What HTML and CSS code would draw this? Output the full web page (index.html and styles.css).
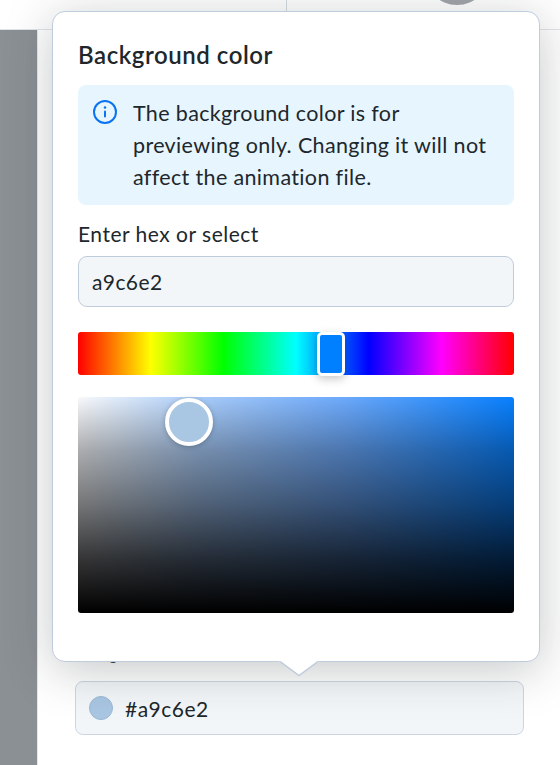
FILE: index.html
```html
<!DOCTYPE html>
<html lang="en">
<head>
<meta charset="utf-8">
<title>Background color</title>
<link rel="stylesheet" href="styles.css">
</head>
<body>
<div class="page">
  <header class="topbar">
    <div class="topbar-left"></div>
    <div class="topbar-right"><span class="avatar"></span></div>
  </header>
  <div class="content">
    <aside class="sidebar"></aside>
    <main class="main">
      <div class="field-label">Background color</div>
      <div class="color-field">
        <span class="swatch"></span>
        <span class="color-value">#a9c6e2</span>
      </div>
    </main>
  </div>
  <section class="popover">
    <h2 class="title">Background color</h2>
    <div class="notice">
      <svg class="info-icon" viewBox="0 0 24 24" width="24" height="24" aria-hidden="true">
        <circle cx="12" cy="12" r="11" fill="none" stroke="#0a74f0" stroke-width="2"/>
        <circle cx="12" cy="7.6" r="1.25" fill="#0a74f0"/>
        <rect x="11" y="10.5" width="2" height="7" rx="1" fill="#0a74f0"/>
      </svg>
      <p class="notice-text">The background color is for previewing only. Changing it will not affect the animation file.</p>
    </div>
    <label class="hex-label" for="hex">Enter hex or select</label>
    <input class="hex-input" id="hex" type="text" value="a9c6e2">
    <div class="hue">
      <span class="hue-thumb"></span>
    </div>
    <div class="spectrum">
      <span class="spectrum-thumb"></span>
    </div>
    <svg class="arrow" viewBox="0 0 40 16" width="40" height="16" aria-hidden="true">
      <polygon points="0,0 20,14.5 40,0" fill="#ffffff"/>
      <polyline points="1,0.5 20,14.5 39,0.5" fill="none" stroke="#bfccdc" stroke-width="1.5"/>
    </svg>
  </section>
</div>
</body>
</html>
```
FILE: styles.css
```css
* { box-sizing: border-box; }
html, body { margin: 0; padding: 0; height: 100%; }
body {
  background: #ffffff;
  color: #20272c;
  font-family: "Lato", "Noto Sans", sans-serif;
  overflow: hidden;
}
.page {
  position: relative;
  width: 560px;
  height: 765px;
  display: flex;
  flex-direction: column;
  overflow: hidden;
}
.topbar {
  height: 30px;
  flex: none;
  display: flex;
  border-bottom: 1px solid #dfe4ea;
}
.topbar-left {
  width: 287px;
  border-right: 1px solid #d5dae0;
}
.topbar-right {
  flex: 1;
  position: relative;
  overflow: hidden;
}
.avatar {
  position: absolute;
  left: 137px;
  top: -61px;
  width: 66px;
  height: 66px;
  border-radius: 50%;
  background: #a2a6aa;
}
.content {
  flex: 1;
  display: flex;
}
.sidebar {
  width: 37px;
  background: #8b9095;
}
.main {
  flex: 1;
  border-left: 1px solid #e4e8ec;
  padding: 614px 36px 0 37px;
}
.field-label {
  font-size: 16px;
  line-height: 20px;
  height: 23px;
  margin-bottom: 14px;
  color: #3d4852;
}
.color-field {
  display: flex;
  align-items: center;
  gap: 12px;
  height: 54px;
  padding: 0 13px;
  background: #f3f6f8;
  border: 1px solid #ccd6e2;
  border-radius: 8px;
}
.swatch {
  width: 24px;
  height: 24px;
  border-radius: 50%;
  background: #a9c6e2;
  border: 1px solid #9db8d4;
}
.color-value {
  font-size: 21px;
  letter-spacing: 0.5px;
  color: #20272c;
}
.popover {
  position: absolute;
  left: 52px;
  top: 11px;
  width: 488px;
  height: 651px;
  padding: 0 25px;
  background: #ffffff;
  border: 1.5px solid #bfccdc;
  border-radius: 13px;
  box-shadow: 0 8px 48px rgba(32, 39, 44, 0.26);
}
.title {
  margin: 0;
  padding-top: 28px;
  height: 73px;
  font-size: 24px;
  line-height: 30px;
  letter-spacing: 0.55px;
  font-weight: 600;
  color: #20272c;
}
.notice {
  display: flex;
  gap: 16px;
  height: 120px;
  padding: 12px 15px;
  background: #e6f5fe;
  border-radius: 8px;
}
.info-icon { flex: none; margin-top: 3px; }
.notice-text {
  margin: 0;
  font-size: 21.5px;
  line-height: 32px;
  letter-spacing: 0.35px;
  color: #20272c;
}
.hex-label {
  display: block;
  margin-top: 16px;
  height: 35px;
  font-size: 21px;
  line-height: 26px;
  letter-spacing: 0.5px;
  color: #20272c;
}
.hex-input {
  display: block;
  width: 100%;
  height: 51px;
  padding: 0 13px;
  background: #f3f6f8;
  border: 1.5px solid #bfccdc;
  border-radius: 9px;
  font-family: inherit;
  font-size: 21px;
  letter-spacing: 0.4px;
  color: #20272c;
  outline: none;
}
.hue {
  position: relative;
  height: 43px;
  margin-top: 25px;
  border-radius: 3px;
  background: linear-gradient(to right, #ff0000 0%, #ffff00 16.67%, #00ff00 33.33%, #00ffff 50%, #0000ff 66.67%, #ff00ff 83.33%, #ff0000 100%);
}
.hue-thumb {
  position: absolute;
  left: 239px;
  top: 0;
  width: 28px;
  height: 44px;
  background: #0080ff;
  border: 3px solid #ffffff;
  border-radius: 5px;
  box-shadow: 0 3px 8px rgba(32, 39, 44, 0.25);
}
.spectrum {
  position: relative;
  height: 216px;
  margin-top: 22px;
  border-radius: 3px;
  background:
    linear-gradient(to bottom, rgba(0, 0, 0, 0) 0%, rgba(0, 0, 0, 0.31) 25%, rgba(0, 0, 0, 0.53) 50%, rgba(0, 0, 0, 0.79) 75%, #000000 100%),
    linear-gradient(to right, #f8f9fb 0%, #a9ccf9 28%, #6aa8fb 62%, #0880ff 100%);
}
.spectrum-thumb {
  position: absolute;
  left: 87px;
  top: 1px;
  width: 48px;
  height: 48px;
  background: #a9c6e2;
  border: 4px solid #ffffff;
  border-radius: 50%;
  box-shadow: 0 1px 5px rgba(32, 39, 44, 0.3);
}
.arrow {
  position: absolute;
  left: 225.5px;
  bottom: -15.5px;
}
```
